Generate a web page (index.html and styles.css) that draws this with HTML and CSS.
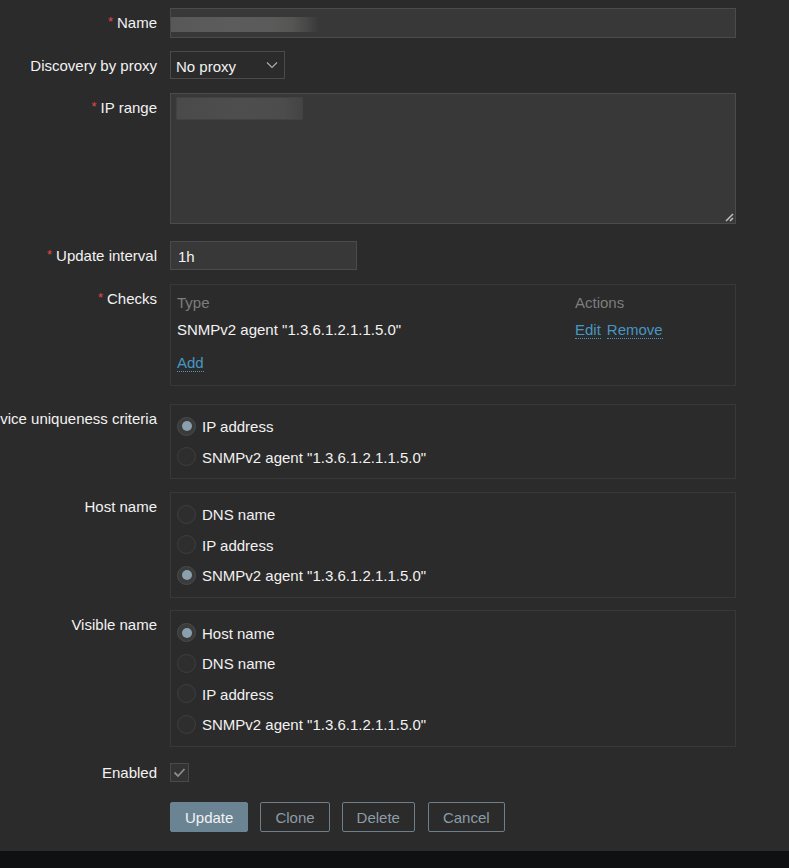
FILE: index.html
```html
<!DOCTYPE html>
<html>
<head>
<meta charset="utf-8">
<link rel="stylesheet" href="styles.css">
</head>
<body>
<div class="form">
  <div class="row">
    <div class="label"><span class="req">*</span>Name</div>
    <div class="field"><div class="input wide h30"><div class="blur blur-name"></div></div></div>
  </div>
  <div class="row">
    <div class="label">Discovery by proxy</div>
    <div class="field">
      <div class="select">
        <span>No proxy</span>
        <svg class="chev" width="12" height="8" viewBox="0 0 12 8"><polyline points="1,1.5 6,6.5 11,1.5" fill="none" stroke="#b0b0b0" stroke-width="1.1"/></svg>
      </div>
    </div>
  </div>
  <div class="row r-ip">
    <div class="label"><span class="req">*</span>IP range</div>
    <div class="field">
      <div class="textarea">
        <div class="blur blur-ip"></div>
        <svg class="grip" width="10" height="10" viewBox="0 0 10 10"><line x1="2" y1="9" x2="9" y2="2" stroke="#bdbdbd" stroke-width="1.6"/><line x1="6" y1="9" x2="9" y2="6" stroke="#bdbdbd" stroke-width="1.6"/></svg>
      </div>
    </div>
  </div>
  <div class="row r-upd">
    <div class="label"><span class="req">*</span>Update interval</div>
    <div class="field"><div class="input short">1h</div></div>
  </div>
  <div class="row r-checks">
    <div class="label"><span class="req">*</span>Checks</div>
    <div class="field">
      <div class="box checks">
        <div class="trow thead"><div class="c-type">Type</div><div class="c-act">Actions</div></div>
        <div class="trow tdata"><div class="c-type">SNMPv2 agent "1.3.6.1.2.1.1.5.0"</div><div class="c-act"><a class="link">Edit</a><a class="link">Remove</a></div></div>
        <div class="add"><a class="link">Add</a></div>
      </div>
    </div>
  </div>
  <div class="row r-dev">
    <div class="label">Device uniqueness criteria</div>
    <div class="field">
      <div class="box radios">
        <div class="radio"><span class="dot on"></span>IP address</div>
        <div class="radio"><span class="dot"></span>SNMPv2 agent "1.3.6.1.2.1.1.5.0"</div>
      </div>
    </div>
  </div>
  <div class="row">
    <div class="label">Host name</div>
    <div class="field">
      <div class="box radios">
        <div class="radio"><span class="dot"></span>DNS name</div>
        <div class="radio"><span class="dot"></span>IP address</div>
        <div class="radio"><span class="dot on"></span>SNMPv2 agent "1.3.6.1.2.1.1.5.0"</div>
      </div>
    </div>
  </div>
  <div class="row r-vis">
    <div class="label">Visible name</div>
    <div class="field">
      <div class="box radios vis">
        <div class="radio"><span class="dot on"></span>Host name</div>
        <div class="radio"><span class="dot"></span>DNS name</div>
        <div class="radio"><span class="dot"></span>IP address</div>
        <div class="radio"><span class="dot"></span>SNMPv2 agent "1.3.6.1.2.1.1.5.0"</div>
      </div>
    </div>
  </div>
  <div class="row r-en">
    <div class="label lbl-en">Enabled</div>
    <div class="field">
      <div class="checkbox"><svg width="17" height="17" viewBox="0 0 17 17"><polyline points="3.5,8.5 7,12 13.5,5" fill="none" stroke="#8c8c8c" stroke-width="1.8"/></svg></div>
    </div>
  </div>
  <div class="row r-btn">
    <div class="label"></div>
    <div class="field buttons">
      <button class="btn primary">Update</button>
      <button class="btn alt">Clone</button>
      <button class="btn alt">Delete</button>
      <button class="btn alt cancel">Cancel</button>
    </div>
  </div>
</div>
<div class="footer"></div>
</body>
</html>
```

FILE: styles.css
```css
html, body {
  margin: 0;
  padding: 0;
  background: #2b2b2b;
  color: #f2f2f2;
  font-family: "Liberation Sans", Arial, sans-serif;
  font-size: 15px;
  overflow: hidden;
}
.form {
  display: flex;
  flex-direction: column;
  gap: 13px;
  padding-top: 8px;
  height: 851px;
  box-sizing: border-box;
}
.row {
  display: grid;
  grid-template-columns: 157px 566px;
  column-gap: 13px;
}
.r-ip { margin-top: 1px; }
.r-upd { margin-top: 4px; }
.r-checks { margin-top: 1px; }
.r-dev { margin-top: 5px; }
.r-vis { margin-top: -1px; }
.r-en { margin-top: 3px; }
.r-btn { margin-top: 7px; }
.label {
  display: flex;
  justify-content: flex-end;
  white-space: nowrap;
  line-height: 18px;
  padding-top: 6px;
  height: 18px;
}
.lbl-en { padding-top: 1px; }
.req {
  color: #e04a4a;
  font-size: 13px;
  margin-right: 4px;
  position: relative;
  top: -1px;
}
.field { display: flex; }
.input {
  box-sizing: border-box;
  background: #383838;
  border: 1px solid #4b4b4b;
  height: 30px;
  line-height: 29px;
  padding-left: 7px;
  color: #f2f2f2;
}
.wide { width: 566px; padding-left: 0; }
.short { width: 187px; height: 29px; line-height: 29px; }
.blur {
  border-radius: 1px;
}
.blur-name {
  margin-top: 8px;
  width: 148px;
  height: 15px;
  background: linear-gradient(to right, #585858 0%, #5c5c5c 40%, #5a5a5a 70%, #555653 82%, #474747 92%, #383838 100%);
}
.select {
  box-sizing: border-box;
  width: 115px;
  height: 28px;
  border: 1px solid #4b4b4b;
  background: #2b2b2b;
  display: flex;
  align-items: center;
  justify-content: space-between;
  padding: 2px 6px 0 5px;
}
.chev { margin-top: -3px; }
.textarea {
  position: relative;
  box-sizing: border-box;
  width: 566px;
  height: 131px;
  background: #383838;
  border: 1px solid #4b4b4b;
  padding: 3px 5px;
}
.blur-ip {
  width: 127px;
  height: 23px;
  background: linear-gradient(to right, #4a4a4a 0%, #4e4e4e 50%, #4c4c4c 85%, #444 100%);
  border: 1px solid #424242;
  box-sizing: border-box;
}
.grip {
  position: absolute;
  right: 1px;
  bottom: 1px;
}
.box {
  box-sizing: border-box;
  width: 566px;
  border: 1px solid #383838;
}
.checks {
  height: 102px;
  padding: 9px 6px 0 6px;
}
.trow {
  display: flex;
  line-height: 18px;
}
.c-type { width: 398px; }
.thead { color: #7d7d7d; }
.tdata { margin-top: 9px; }
.add { margin-top: 15px; line-height: 18px; }
.link {
  color: #4796c4;
  border-bottom: 1px dotted #4796c4;
  margin-right: 6px;
  cursor: pointer;
}
.radios {
  padding: 6px 6px 6px 6px;
}
.radios.vis {
  padding: 7px 6px 6px 6px;
}
.radio {
  height: 30.5px;
  display: flex;
  align-items: center;
  padding-top: 1px;
  box-sizing: border-box;
}
.dot {
  box-sizing: border-box;
  width: 19px;
  height: 19px;
  border-radius: 50%;
  background: #2e2e2e;
  border: 1px solid #3e3e3e;
  margin-right: 6px;
  margin-top: -1px;
  display: flex;
  align-items: center;
  justify-content: center;
}
.dot.on {
  background: #3b3b3b;
  border-color: #4a4a4a;
}
.dot.on::after {
  content: "";
  width: 10px;
  height: 10px;
  border-radius: 50%;
  background: #8aa0ae;
}
.checkbox {
  box-sizing: border-box;
  width: 19px;
  height: 19px;
  border: 1px solid #4a4a4a;
  background: #333;
  display: flex;
  align-items: center;
  justify-content: center;
}
.buttons { gap: 12px; }
.btn {
  box-sizing: border-box;
  height: 30px;
  padding: 1px 14px 0 14px;
  font-family: "Liberation Sans", Arial, sans-serif;
  font-size: 15px;
  border-radius: 2px;
  cursor: pointer;
}
.primary {
  background: #6a8494;
  border: 1px solid #6a8494;
  color: #f2f2f2;
}
.alt {
  background: transparent;
  border: 1px solid #6f7f89;
  color: #8c9ca6;
}
.cancel { margin-left: 1px; }
.footer {
  height: 17px;
  background: #0f1012;
}
```
